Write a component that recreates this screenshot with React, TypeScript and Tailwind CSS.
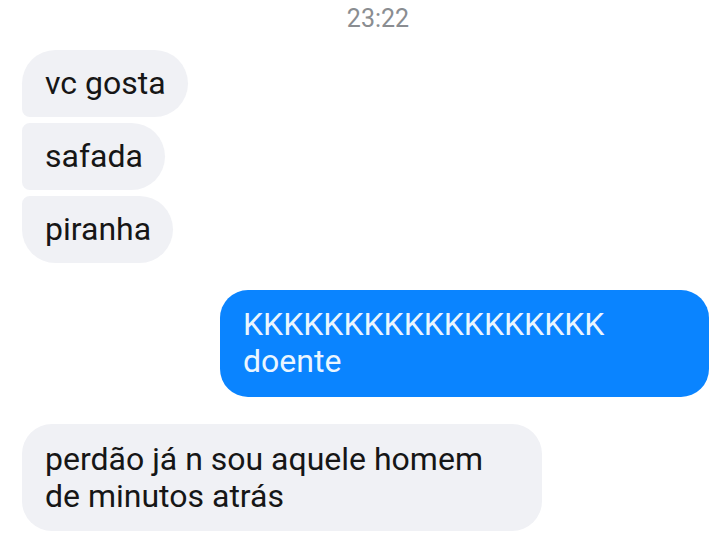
export default function App() {
  const font = { fontFamily: "Roboto, 'Noto Sans', sans-serif" };
  return (
    <div className="w-[720px] h-[550px] bg-white overflow-hidden" style={font}>
      <div className="flex justify-center pt-[3px] pl-[36px] h-[50px]">
        <span className="text-[25px] leading-[32px] text-[#8a8d91]">23:22</span>
      </div>
      <div className="flex flex-col items-start gap-[6px] pl-[22px]">
        <div className="bg-[#f0f1f5] text-[#161616] text-[32px] leading-[37px] pl-[23px] pr-[22px] py-[15px] rounded-[34px] rounded-bl-[8px]">
          vc gosta
        </div>
        <div className="bg-[#f0f1f5] text-[#161616] text-[32px] leading-[37px] pl-[23px] pr-[22px] py-[15px] rounded-[34px] rounded-l-[8px]">
          safada
        </div>
        <div className="bg-[#f0f1f5] text-[#161616] text-[32px] leading-[37px] pl-[23px] pr-[22px] py-[15px] rounded-[34px] rounded-tl-[8px]">
          piranha
        </div>
      </div>
      <div className="flex justify-end pr-[11px] mt-[27px]">
        <div className="w-[489px] bg-[#0a84ff] text-[#eaf6ff] text-[32px] leading-[37px] pl-[23px] pr-[20px] pt-[16px] pb-[17px] rounded-[28px]">
          KKKKKKKKKKKKKKKKKK
          <br />
          doente
        </div>
      </div>
      <div className="flex pl-[22px] mt-[27px]">
        <div className="w-[520px] bg-[#f0f1f5] text-[#161616] text-[32px] leading-[37px] pl-[23px] pr-[20px] pt-[17px] pb-[16px] rounded-[30px]">
          perdão já n sou aquele homem
          <br />
          de minutos atrás
        </div>
      </div>
    </div>
  );
}
